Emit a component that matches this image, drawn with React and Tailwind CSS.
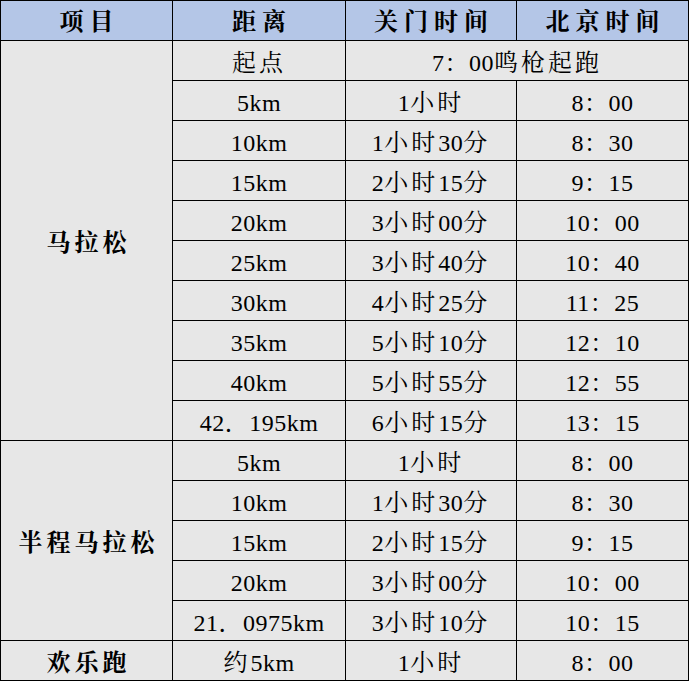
import React from "react";

const FONT = {
  fontFamily:
    '"Liberation Serif", "Noto Serif CJK SC", "Noto Sans CJK SC", serif',
};

function T({ text }) {
  const parts = text.split(/([\u4e00-\u9fff]+)/).filter((p) => p.length);
  return (
    <span className="whitespace-nowrap">
      {parts.map((p, i) =>
        /[\u4e00-\u9fff]/.test(p) ? (
          <span key={i} className="tracking-[3px]">
            {p}
          </span>
        ) : (
          <span key={i} className="tracking-[0.5px]">
            {p}
          </span>
        )
      )}
    </span>
  );
}

const body = "flex items-center justify-center bg-[#e7e7e7] text-[24px] text-black leading-none pt-[4px]";
const head = "flex items-center justify-center bg-[#b4c6e7] text-[24px] font-bold text-black leading-none tracking-[6px] pl-[6px] pt-[2px]";
const label = "flex items-center justify-center bg-[#e7e7e7] text-[24px] font-bold text-black leading-none tracking-[4px] pl-[4px] pt-[4px]";

const marathon = [
  ["5km", "1小时", "8：00"],
  ["10km", "1小时30分", "8：30"],
  ["15km", "2小时15分", "9：15"],
  ["20km", "3小时00分", "10：00"],
  ["25km", "3小时40分", "10：40"],
  ["30km", "4小时25分", "11：25"],
  ["35km", "5小时10分", "12：10"],
  ["40km", "5小时55分", "12：55"],
  ["42．195km", "6小时15分", "13：15"],
];

const half = [
  ["5km", "1小时", "8：00"],
  ["10km", "1小时30分", "8：30"],
  ["15km", "2小时15分", "9：15"],
  ["20km", "3小时00分", "10：00"],
  ["21．0975km", "3小时10分", "10：15"],
];

function Row({ r }) {
  return (
    <>
      {r.map((c, i) => (
        <div key={i} className={body}>
          <T text={c} />
        </div>
      ))}
    </>
  );
}

export default function App() {
  return (
    <div className="w-[689px] h-[681px] bg-white" style={FONT}>
      <div className="grid grid-cols-[171px_172px_170px_171px] auto-rows-[39px] gap-px bg-black p-px w-[689px]">
        <div className={head}>项目</div>
        <div className={head}>距离</div>
        <div className={head}>关门时间</div>
        <div className={head}>北京时间</div>

        <div className={`${label} row-span-10`}>马拉松</div>
        <div className={body}>
          <T text="起点" />
        </div>
        <div className={`${body} col-span-2`}>
          <T text="7：00鸣枪起跑" />
        </div>
        {marathon.map((r, i) => (
          <Row key={"m" + i} r={r} />
        ))}

        <div className={`${label} row-span-5`}>半程马拉松</div>
        {half.map((r, i) => (
          <Row key={"h" + i} r={r} />
        ))}

        <div className={label}>欢乐跑</div>
        <Row r={["约5km", "1小时", "8：00"]} />
      </div>
    </div>
  );
}
